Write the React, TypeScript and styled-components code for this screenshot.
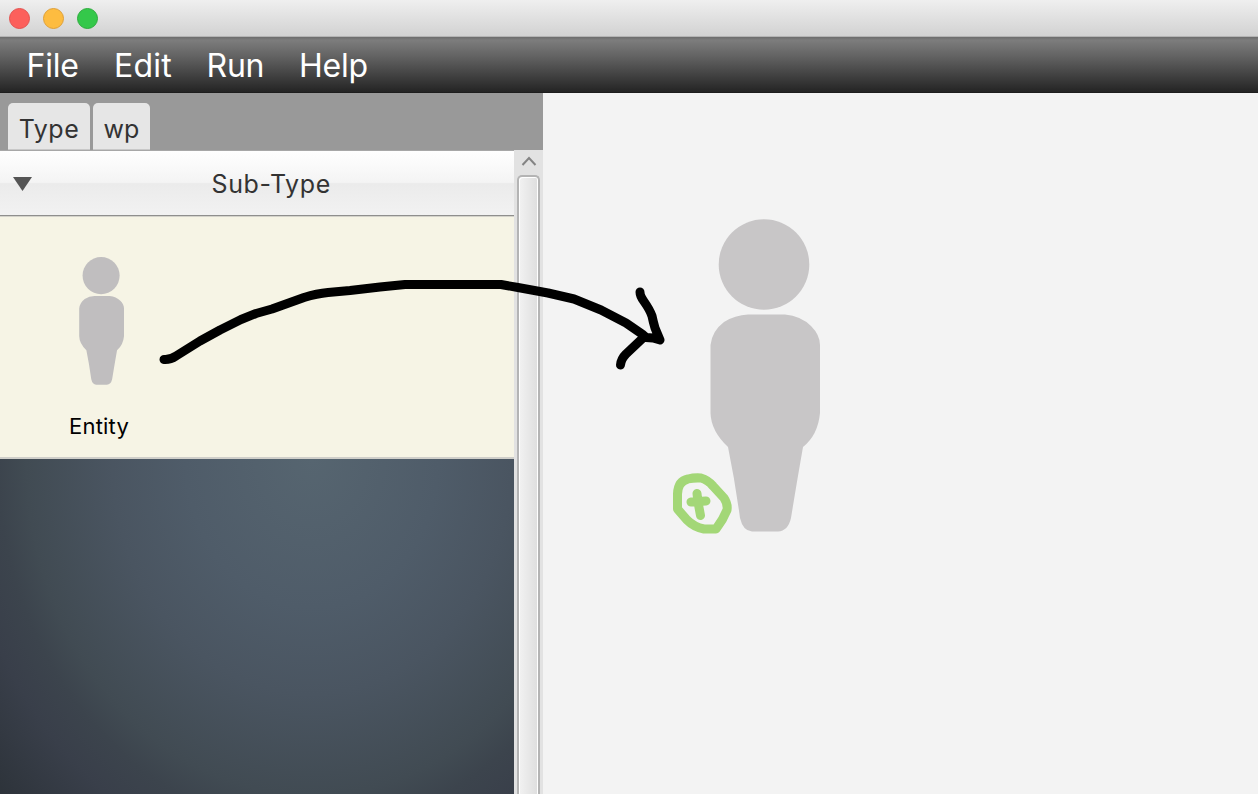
import React from "react";
import styled, { createGlobalStyle } from "styled-components";

const GlobalStyle = createGlobalStyle`
  * { box-sizing: border-box; }
  body { margin: 0; overflow: hidden; font-family: Inter, Roboto, sans-serif; }
`;

const Window = styled.div`
  position: relative;
  display: flex;
  flex-direction: column;
  width: 1258px;
  height: 794px;
  overflow: hidden;
  background: #f3f3f3;
`;

const TitleBar = styled.header`
  flex: none;
  display: flex;
  align-items: center;
  gap: 13px;
  height: 37px;
  padding: 0 9.4px;
  background: linear-gradient(#efefef, #d2d2d2);
  border-bottom: 1px solid #b4b4b4;
`;

const Light = styled.span<{ $fill: string; $rim: string }>`
  width: 21px;
  height: 21px;
  border-radius: 50%;
  background: ${(p) => p.$fill};
  border: 1px solid ${(p) => p.$rim};
`;

const MenuBar = styled.nav`
  flex: none;
  display: flex;
  height: 56px;
  padding-left: 26.5px;
  background: linear-gradient(#6c6c6c 0, #7d7d7d 3px, #626262 35%, #242424 98%, #181818);
`;

const MenuItem = styled.span<{ $width: number; $spacing: number }>`
  width: ${(p) => p.$width}px;
  color: #fff;
  font-size: 32px;
  line-height: 58px;
  letter-spacing: ${(p) => p.$spacing}px;
  white-space: nowrap;
`;

const Body = styled.div`
  flex: 1;
  display: flex;
  min-height: 0;
`;

const SidePanel = styled.aside`
  display: flex;
  flex-direction: column;
  width: 543px;
`;

const TabStrip = styled.div`
  flex: none;
  display: flex;
  align-items: flex-end;
  gap: 3px;
  height: 57px;
  padding: 0 8px;
  background: #999;
`;

const Tab = styled.div<{ $width: number; $spacing: number }>`
  display: flex;
  justify-content: center;
  width: ${(p) => p.$width}px;
  height: 47px;
  border-radius: 5px 5px 0 0;
  background: #e6e6e6;
  border-bottom: 1px solid #c8c8c8;
  color: #333;
  font-size: 25px;
  line-height: 53px;
  letter-spacing: ${(p) => p.$spacing}px;
`;

const PanelBody = styled.div`
  flex: 1;
  display: flex;
  min-height: 0;
`;

const Sections = styled.div`
  display: flex;
  flex-direction: column;
  width: 514px;
`;

const SectionHeader = styled.div`
  flex: none;
  display: flex;
  align-items: center;
  height: 66px;
  padding: 1px 0 0 13px;
  border-top: 1px solid #a8a8a8;
  border-bottom: 1px solid #8f8f8d;
  background: linear-gradient(#fff 0, #f4f4f4 49%, #ebebeb 51%, #f2f2f2 100%);
`;

const Disclosure = styled.svg`
  width: 19px;
  height: 14px;
  fill: #555;
`;

const SectionTitle = styled.span`
  width: 125px;
  margin-left: 179.5px;
  color: #333;
  font-size: 25px;
  line-height: 60px;
  letter-spacing: 0.65px;
  white-space: nowrap;
`;

const Palette = styled.div`
  flex: none;
  height: 243px;
  padding: 40px 0 0 49px;
  background: #f6f4e5;
  border-top: 1px solid #d4d3cb;
  border-bottom: 2px solid #cfcec9;
`;

const PaletteItem = styled.div`
  display: flex;
  flex-direction: column;
  align-items: center;
  width: 100px;
`;

const SmallPerson = styled.svg`
  width: 45px;
  height: 128px;
  margin-left: 5px;
  fill: #c0bebf;
`;

const ItemLabel = styled.span`
  margin-top: 25px;
  color: #000;
  font-size: 22px;
  line-height: 32px;
  letter-spacing: 0.2px;
`;

const Backdrop = styled.div`
  flex: 1;
  background: radial-gradient(ellipse 408px 480px at 312px 0, #566570 0, #4f5c69 31%, #4a5561 49%, #414b53 70%, #3c444d 77%, #393f4a 86%, #2d333a 104%);
`;

const ScrollBar = styled.div`
  display: flex;
  flex-direction: column;
  align-items: center;
  width: 29px;
  background: #e2e2e2;
`;

const ScrollUp = styled.svg`
  flex: none;
  width: 16px;
  height: 25px;
  fill: none;
  stroke: #848484;
  stroke-width: 2;
`;

const Thumb = styled.div`
  flex: 1;
  width: 23px;
  border: 2px solid #b4b4b4;
  border-bottom: 0;
  border-radius: 5px 5px 0 0;
  background: linear-gradient(90deg, #f2f2f2, #dedede);
  box-shadow: inset 1px 1px 0 #fff, inset -1px 0 0 #fff;
`;

const Canvas = styled.main`
  position: relative;
  flex: 1;
  background: #f3f3f3;
`;

const DraggedPerson = styled.svg`
  position: absolute;
  left: 167px;
  top: 126px;
  width: 111px;
  height: 314px;
  fill: #c8c6c7;
`;

const Annotation = styled.svg`
  position: absolute;
  left: 0;
  top: 0;
  width: 1258px;
  height: 794px;
  fill: none;
  stroke-linecap: round;
  stroke-linejoin: round;
  pointer-events: none;
`;

const PersonShape = () => (
  <>
    <circle cx="54" cy="45.5" r="45.3" />
    <path d="M38 95.500H75Q91 97 101 107Q110 116 110 126V194Q108 216 93 228Q86 268 81 299Q78 312 68 312.500H42Q33 312 30 299Q25 262 18 228Q1 212 .5 194V126Q2 112 14 103Q25 96 38 95.500Z" />
  </>
);

const menus = [
  { label: "File", width: 87.5, spacing: -0.2 },
  { label: "Edit", width: 92.5, spacing: 0.2 },
  { label: "Run", width: 92.5, spacing: -0.2 },
  { label: "Help", width: 80, spacing: -0.2 },
];

export default function App() {
  return (
    <Window>
      <GlobalStyle />
      <TitleBar>
        <Light $fill="#fc605c" $rim="#e4524f" />
        <Light $fill="#fdbc40" $rim="#dfa037" />
        <Light $fill="#34c84a" $rim="#2cac3c" />
      </TitleBar>
      <MenuBar>
        {menus.map((m) => (
          <MenuItem key={m.label} $width={m.width} $spacing={m.spacing}>{m.label}</MenuItem>
        ))}
      </MenuBar>
      <Body>
        <SidePanel>
          <TabStrip>
            <Tab $width={82} $spacing={0.5}>Type</Tab>
            <Tab $width={57} $spacing={0}>wp</Tab>
          </TabStrip>
          <PanelBody>
            <Sections>
              <SectionHeader>
                <Disclosure viewBox="0 0 19 14"><path d="M0 0H19L9.500 14Z" /></Disclosure>
                <SectionTitle>Sub-Type</SectionTitle>
              </SectionHeader>
              <Palette>
                <PaletteItem>
                  <SmallPerson viewBox="0 0 110 313" preserveAspectRatio="none"><PersonShape /></SmallPerson>
                  <ItemLabel>Entity</ItemLabel>
                </PaletteItem>
              </Palette>
              <Backdrop />
            </Sections>
            <ScrollBar>
              <ScrollUp viewBox="0 0 16 25"><path d="M1.500 15L8 8L14.500 15" /></ScrollUp>
              <Thumb />
            </ScrollBar>
          </PanelBody>
        </SidePanel>
        <Canvas>
          <DraggedPerson viewBox="0 0 111 314"><PersonShape /></DraggedPerson>
        </Canvas>
      </Body>
      <Annotation viewBox="0 0 1258 794">
        <g stroke="#000" strokeWidth="9">
          <path d="M164 359.500Q170 360 176 356L200 341L220 330L241 319.500L256 313.500L272 309L304 297.500Q317 293.500 328 292.500L350 290.500L380 287L405 284.500H501L518 287.500L548 293L574 299L601 310L626 323L642 334L646 337.500L653 338L660 340L655 328Q653 321 652 316Q650 310 644 301.500Q640 296 640 292" />
          <path d="M644 337L626 354Q621 359 620.500 365" />
        </g>
        <g stroke="#a3d777" strokeWidth="9">
          <path d="M688 479Q694 477.500 701 478Q708 480 713 486L724 498Q728 504 727 510Q723 520 716 529H704Q694 527 687 520L677.500 509V494Q678 481 688 479Z" />
          <path d="M691 502L706 501M697 493.500L698 502L700.500 515.500" />
        </g>
      </Annotation>
    </Window>
  );
}
